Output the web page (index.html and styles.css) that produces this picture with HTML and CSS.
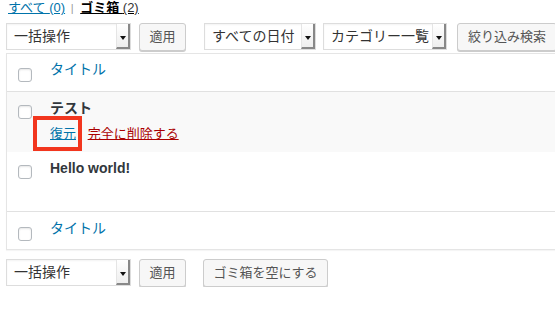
FILE: index.html
```html
<!DOCTYPE html>
<html>
<head>
  <meta charset="UTF-8">
  <title>投稿 - ゴミ箱</title>
  <link rel="stylesheet" href="styles.css">
</head>
<body>
  <div class="wrap">
    <div class="subsubsub">
      <a href="#">すべて <span class="count">(0)</span></a>
      <span class="sep">|</span>
      <a class="current" href="#">ゴミ箱 <span class="count">(2)</span></a>
    </div>

    <div class="tablenav top">
      <div class="select bulk"><span>一括操作</span><i class="arrow"></i></div>
      <button class="btn apply">適用</button>
      <div class="select dates"><span>すべての日付</span><i class="arrow"></i></div>
      <div class="select cats"><span>カテゴリー一覧</span><i class="arrow"></i></div>
      <button class="btn filter">絞り込み検索</button>
    </div>

    <div class="list">
      <div class="row head">
        <div class="cb"><input type="checkbox"></div>
        <div class="title"><a href="#">タイトル</a></div>
      </div>
      <div class="row item hover">
        <div class="cb"><input type="checkbox"></div>
        <div class="title">
          <strong>テスト</strong>
          <div class="row-actions">
            <a class="untrash" href="#">復元</a>
            <a class="delete" href="#">完全に削除する</a>
            <span class="mark"></span>
          </div>
        </div>
      </div>
      <div class="row item last">
        <div class="cb"><input type="checkbox"></div>
        <div class="title"><strong>Hello world!</strong></div>
      </div>
      <div class="row foot">
        <div class="cb"><input type="checkbox"></div>
        <div class="title"><a href="#">タイトル</a></div>
      </div>
    </div>

    <div class="tablenav bottom">
      <div class="select bulk"><span>一括操作</span><i class="arrow"></i></div>
      <button class="btn apply">適用</button>
      <button class="btn empty">ゴミ箱を空にする</button>
    </div>
  </div>
</body>
</html>
```

FILE: styles.css
```css
html, body { overflow: hidden; }
body {
  margin: 0;
  background: #fff;
  color: #32373c;
  font-family: "Liberation Sans", "Noto Sans CJK JP", sans-serif;
  font-size: 13px;
}
a { color: #0073aa; }

.wrap { padding-left: 6px; }

.subsubsub {
  line-height: 16px;
  padding-left: 2px;
  color: #999;
}
.subsubsub a { color: #0073aa; }
.subsubsub .sep { margin: 0 3px 0 2px; font-size: 11px; }
.subsubsub .current { color: #000; font-weight: bold; }
.subsubsub .current .count { font-weight: normal; color: #333; }

.tablenav {
  display: flex;
  align-items: flex-start;
  height: 28px;
}
.tablenav > * { flex-shrink: 0; white-space: nowrap; }
.tablenav.top { margin-top: 7px; }
.tablenav.bottom { margin-top: 9px; }

.select {
  position: relative;
  box-sizing: border-box;
  height: 27px;
  border: 1px solid #ddd;
  background: #fff;
  box-shadow: inset 0 1px 2px rgba(0,0,0,.05);
  font-size: 14px;
  line-height: 25px;
  color: #333;
  padding-left: 7px;
}
.select .arrow {
  position: absolute;
  right: 0;
  top: 0;
  bottom: 0;
  width: 11px;
  background: linear-gradient(#fff, #eee);
  border-right: 2px solid #888;
  border-bottom: 2px solid #888;
  border-left: 1px solid #e5e5e5;
}
.select .arrow::after {
  content: "";
  position: absolute;
  left: 3px;
  top: 12px;
  border-left: 3px solid transparent;
  border-right: 3px solid transparent;
  border-top: 4px solid #111;
}
.bulk { width: 125px; }
.dates { width: 112px; margin-left: 18px; }
.cats { width: 124px; margin-left: 7px; }

.btn {
  box-sizing: border-box;
  height: 28px;
  margin: 0;
  padding: 0 10px;
  border: 1px solid #ccc;
  border-radius: 3px;
  background: #f7f7f7;
  box-shadow: 0 1px 0 #ccc;
  color: #555;
  font-family: "Liberation Sans", "Noto Sans CJK JP", sans-serif;
  font-size: 13px;
  line-height: 26px;
}
.apply { width: 47px; margin-left: 8px; padding: 0; }
.filter { width: 100px; margin-left: 10px; }
.empty { width: 125px; margin-left: 17px; padding: 0; }

.list {
  margin-top: 2px;
  width: 620px;
  border: 1px solid #e5e5e5;
  box-shadow: 0 1px 1px rgba(0,0,0,.04);
}
.row { display: flex; }
.cb { width: 43px; box-sizing: border-box; padding-left: 11px; }
.title { line-height: 20px; }
.title > a { text-decoration: none; }
.title strong { font-size: 14px; color: #32373c; }

.cb input {
  -webkit-appearance: none;
  appearance: none;
  display: block;
  margin: 0;
  width: 14px;
  height: 14px;
  border: 1px solid #b4b9be;
  border-radius: 3px;
  background: #fff;
  box-shadow: inset 0 1px 2px rgba(0,0,0,.1);
}

.head, .foot { height: 37px; }
.head { border-bottom: 1px solid #e1e1e1; }
.head .cb, .foot .cb { padding-top: 14px; }
.head .title, .foot .title { padding-top: 5px; font-size: 14px; }
.foot .cb { padding-top: 15px; }
.foot .title { padding-top: 6px; }

.item { height: 59px; }
.item .cb { padding-top: 13px; }
.item .title { padding-top: 6px; }
.hover { height: 60px; background: #f9f9f9; }
.last { border-bottom: 1px solid #e1e1e1; }

.row-actions {
  position: relative;
  margin-top: 5px;
  font-size: 13px;
}
.row-actions .delete { color: #a00; margin-left: 8px; }
.row-actions .mark {
  position: absolute;
  left: -17px;
  top: -8px;
  width: 41px;
  height: 27px;
  border: 4px solid #f2361e;
}
```
